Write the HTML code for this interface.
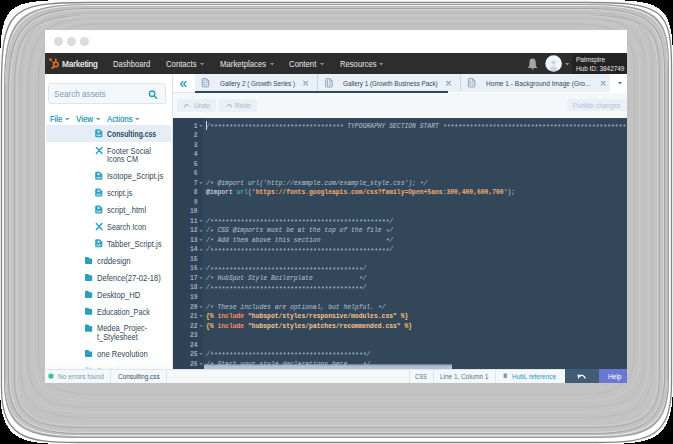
<!DOCTYPE html>
<html><head><meta charset="utf-8">
<style>
*{margin:0;padding:0;box-sizing:border-box}
html,body{width:673px;height:444px;overflow:hidden;background:#000}
body{position:relative;font-family:"Liberation Sans",sans-serif}
.a{position:absolute}
.t{position:absolute;white-space:nowrap;line-height:1}
svg.i{position:absolute;overflow:visible}
</style></head><body>
<svg class="a" style="left:0;top:0" width="673" height="444" viewBox="0 0 673 444"><path d="M0.00,86.30 C0.00,0.00 0.00,0.00 86.60,0.00 L587.80,0.00 C661.75,0.00 673.00,0.00 673.00,63.50 L673.00,384.50 C673.00,442.57 651.85,444.00 597.75,444.00 L76.30,444.00 C23.65,444.00 0.00,444.00 0.00,388.20 Z" fill="#fbfbfb" shape-rendering="crispEdges"/><path d="M1.50,88.80 C1.50,10.27 9.29,2.50 88.10,2.50 L586.30,2.50 C660.25,2.50 671.50,8.21 671.50,66.00 L671.50,383.00 C671.50,437.14 650.35,442.50 596.25,442.50 L77.80,442.50 C25.15,442.50 1.50,437.48 1.50,386.70 Z" fill="#fff" stroke="#858585" stroke-width="1.3"/><path d="M4.00,90.30 C4.00,16.95 16.99,4.00 90.60,4.00 L583.80,4.00 C656.22,4.00 669.00,13.53 669.00,67.50 L669.00,378.50 C669.00,429.07 647.85,438.00 593.75,438.00 L80.30,438.00 C27.65,438.00 4.00,429.63 4.00,382.20 Z" fill="#c3c3c3"/><path d="M4.50,90.80 C4.50,17.45 17.49,4.50 91.10,4.50 L583.30,4.50 C655.72,4.50 668.50,14.03 668.50,68.00 L668.50,378.00 C668.50,428.57 647.35,437.50 593.25,437.50 L80.80,437.50 C28.15,437.50 4.50,429.13 4.50,381.70 Z" fill="none" stroke="#9c9c9c" stroke-width="1.1"/><path d="M5.50,91.80 C5.50,20.17 20.22,5.50 92.10,5.50 L582.30,5.50 C653.02,5.50 667.50,16.30 667.50,69.00 L667.50,376.00 C667.50,425.38 646.35,435.50 592.25,435.50 L81.80,435.50 C29.15,435.50 5.50,426.01 5.50,379.70 Z" fill="none" stroke="#ececec" stroke-width="1"/><path d="M5.50,92.80 C5.50,22.03 21.09,6.50 92.10,6.50 L582.30,6.50 C652.16,6.50 667.50,17.93 667.50,70.00 L667.50,375.00 C667.50,423.79 646.35,434.50 592.25,434.50 L81.80,434.50 C29.15,434.50 5.50,424.46 5.50,378.70 Z" fill="none" stroke="#bdbdbd" stroke-width="1"/><path d="M8.50,93.94 C8.50,25.59 25.65,8.50 94.23,8.50 L580.15,8.50 C647.63,8.50 664.50,21.07 664.50,71.37 L664.50,374.60 C664.50,421.72 643.57,433.50 590.00,433.50 L84.04,433.50 C31.92,433.50 8.50,422.45 8.50,378.26 Z" fill="none" stroke="#a2a2a2" stroke-width="1"/><path d="M10.00,93.21 C10.00,27.08 27.64,9.50 94.00,9.50 L580.86,9.50 C646.14,9.50 663.50,22.43 663.50,71.09 L663.50,374.79 C663.50,420.38 642.99,432.50 590.51,432.50 L84.01,432.50 C32.94,432.50 10.00,421.13 10.00,378.37 Z" fill="none" stroke="#d6d6d6" stroke-width="1"/><path d="M14.50,92.31 C14.50,29.48 28.53,15.50 91.57,15.50 L583.67,15.50 C645.70,15.50 659.50,25.79 659.50,72.02 L659.50,374.55 C659.50,417.86 640.68,427.50 592.53,427.50 L82.41,427.50 C35.55,427.50 14.50,418.46 14.50,377.84 Z" fill="none" stroke="#adadad" stroke-width="1"/><path d="M16.50,90.85 C16.50,32.61 31.66,17.50 90.11,17.50 L585.08,17.50 C642.58,17.50 657.50,28.62 657.50,71.47 L657.50,374.93 C657.50,415.08 639.53,425.50 593.54,425.50 L81.35,425.50 C36.61,425.50 16.50,415.73 16.50,378.07 Z" fill="none" stroke="#cfcfcf" stroke-width="1"/><path d="M20.50,90.74 C20.50,26.51 34.15,12.90 98.61,12.90 L575.65,12.90 C639.07,12.90 652.50,22.91 652.50,70.18 L652.50,363.83 C652.50,408.12 633.43,417.50 584.62,417.50 L89.32,417.50 C41.84,417.50 20.50,408.70 20.50,367.17 Z" fill="none" stroke="#b9b9b9" stroke-width="1"/><path d="M24.50,88.94 C24.50,30.43 39.60,15.38 98.32,15.38 L575.88,15.38 C633.64,15.38 648.50,26.45 648.50,69.51 L648.50,361.58 C648.50,401.93 630.48,412.30 584.36,412.30 L89.54,412.30 C44.66,412.30 24.50,402.57 24.50,364.74 Z" fill="none" stroke="#cbcbcb" stroke-width="1"/><path d="M28.50,87.14 C28.50,34.09 44.79,17.86 98.02,17.86 L576.10,17.86 C628.47,17.86 644.50,29.81 644.50,68.84 L644.50,359.33 C644.50,395.91 627.52,407.10 584.09,407.10 L89.75,407.10 C47.49,407.10 28.50,396.60 28.50,362.30 Z" fill="none" stroke="#b9b9b9" stroke-width="1"/><path d="M33.50,84.89 C33.50,38.32 50.92,20.96 97.65,20.96 L576.38,20.96 C622.36,20.96 639.50,33.73 639.50,68.00 L639.50,356.52 C639.50,388.63 623.84,400.60 583.75,400.60 L90.02,400.60 C51.02,400.60 33.50,389.38 33.50,359.26 Z" fill="none" stroke="#cbcbcb" stroke-width="1"/><path d="M38.50,82.64 C38.50,42.14 56.65,24.06 97.28,24.06 L576.67,24.06 C616.65,24.06 634.50,37.37 634.50,67.16 L634.50,353.71 C634.50,381.63 618.73,394.10 583.42,394.10 L90.29,394.10 C54.56,394.10 38.50,382.41 38.50,356.22 Z" fill="none" stroke="#b9b9b9" stroke-width="1"/></svg>
<div id="ui" style="position:absolute;left:0;top:0;width:673px;height:444px">
<div class="a" style="left:45px;top:30px;width:582px;height:353px;background:#fff"></div>
<div class="a" style="left:54.400000000000006px;top:37.1px;width:8.6px;height:8.6px;background:#dcdcdc;border-radius:50%"></div>
<div class="a" style="left:67.3px;top:37.1px;width:8.6px;height:8.6px;background:#dcdcdc;border-radius:50%"></div>
<div class="a" style="left:80.2px;top:37.1px;width:8.6px;height:8.6px;background:#dcdcdc;border-radius:50%"></div>
<div class="a" style="left:45px;top:53px;width:582px;height:21px;background:#2d2d2d"></div>
<div class="a" style="left:572px;top:53px;width:55px;height:21px;background:#232323"></div>
<svg class="i" style="left:0;top:0" width="673" height="444"><g stroke="#f57722" fill="none" stroke-width="1.5" stroke-linecap="round">
<circle cx="55.8" cy="64.4" r="2.3" stroke-width="1.4"/><line x1="55.8" y1="62" x2="55.8" y2="59.8" stroke-width="1.3"/><line x1="54" y1="63" x2="50.8" y2="59.9" stroke-width="0.9"/><line x1="54.3" y1="66.1" x2="52.8" y2="67.6" stroke-width="1.1"/></g>
<g fill="#f57722"><circle cx="50.4" cy="59.5" r="1.25"/><circle cx="55.8" cy="59.4" r="0.8"/><circle cx="52.6" cy="67.8" r="1.15"/></g>
<path d="M532.6,58.4 C530.2,58.4 529.4,60.4 529.4,63 L529.3,65.8 C529.2,66.6 528.4,67 528.1,67.5 L528.1,68 L537.1,68 L537.1,67.5 C536.8,67 536,66.6 535.9,65.8 L535.8,63 C535.8,60.4 535,58.4 532.6,58.4 Z" fill="#a4a4a4"/>
<circle cx="532.6" cy="68.7" r="0.9" fill="#a4a4a4"/>
<circle cx="553.6" cy="63.5" r="8.3" fill="#f2f5f8"/>
<circle cx="553.5" cy="62.6" r="2.1" fill="#cad7e4"/>
<path d="M549.2,69.6 C549.9,67.3 551.5,66.2 553.5,66.2 C555.5,66.2 557.1,67.3 557.8,69.6 C556.6,70.6 555.2,71.1 553.5,71.1 C551.8,71.1 550.4,70.6 549.2,69.6 Z" fill="#cad7e4"/>
</svg>
<svg class="i" style="left:199.20px;top:62.40px" width="6.4" height="4.4"><path d="M1,1 L5.40,1 L3.20,3.40 Z" fill="#8a8a8a"/></svg>
<svg class="i" style="left:268.80px;top:62.40px" width="6.4" height="4.4"><path d="M1,1 L5.40,1 L3.20,3.40 Z" fill="#8a8a8a"/></svg>
<svg class="i" style="left:319.10px;top:62.40px" width="6.4" height="4.4"><path d="M1,1 L5.40,1 L3.20,3.40 Z" fill="#8a8a8a"/></svg>
<svg class="i" style="left:378.20px;top:62.40px" width="6.4" height="4.4"><path d="M1,1 L5.40,1 L3.20,3.40 Z" fill="#8a8a8a"/></svg>
<svg class="i" style="left:564.10px;top:62.40px" width="6.4" height="4.4"><path d="M1,1 L5.40,1 L3.20,3.40 Z" fill="#8c8c8c"/></svg>
<div class="t" style="left:61.8px;top:60.38px;font-size:9px;color:#ececec;transform:scaleX(0.8984);transform-origin:0 0;text-shadow:0.35px 0 0 rgba(236,236,236,0.8);">Marketing</div>
<div class="t" style="left:113.4px;top:60.38px;font-size:9px;color:#e6e6e6;transform:scaleX(0.8472);transform-origin:0 0;">Dashboard</div>
<div class="t" style="left:166.3px;top:60.38px;font-size:9px;color:#e6e6e6;transform:scaleX(0.8587);transform-origin:0 0;">Contacts</div>
<div class="t" style="left:220.2px;top:60.38px;font-size:9px;color:#e6e6e6;transform:scaleX(0.8632);transform-origin:0 0;">Marketplaces</div>
<div class="t" style="left:289.4px;top:60.38px;font-size:9px;color:#e6e6e6;transform:scaleX(0.8692);transform-origin:0 0;">Content</div>
<div class="t" style="left:339.7px;top:60.38px;font-size:9px;color:#e6e6e6;transform:scaleX(0.8508);transform-origin:0 0;">Resources</div>
<div class="t" style="left:575.9px;top:56.17px;font-size:7.6px;color:#e8e8e8;transform:scaleX(0.8612);transform-origin:0 0;">Palmspire</div>
<div class="t" style="left:575.9px;top:65.27px;font-size:7.6px;color:#e8e8e8;transform:scaleX(0.8423);transform-origin:0 0;">Hub ID: 3842749</div>
<div class="a" style="left:45px;top:74px;width:127px;height:295px;background:#fff"></div>
<div class="a" style="left:172px;top:74px;width:1px;height:295px;background:#dfe3eb"></div>
<div class="a" style="left:47.7px;top:83.3px;width:118.4px;height:21.2px;background:#f5f8fa;border:1px solid #dde5ee;border-radius:3px"></div>
<div class="t" style="left:53.7px;top:89.16px;font-size:9.5px;color:#7c98b6;transform:scaleX(0.8572);transform-origin:0 0;">Search assets</div>
<div class="t" style="left:49.8px;top:115.45px;font-size:8.8px;color:#1c95ba;transform:scaleX(0.8603);transform-origin:0 0;text-shadow:0.25px 0 0 rgba(28,149,186,0.6);">File</div>
<div class="t" style="left:75.9px;top:115.45px;font-size:8.8px;color:#1c95ba;transform:scaleX(0.8987);transform-origin:0 0;text-shadow:0.25px 0 0 rgba(28,149,186,0.6);">View</div>
<div class="t" style="left:106.8px;top:115.45px;font-size:8.8px;color:#1c95ba;transform:scaleX(0.8836);transform-origin:0 0;text-shadow:0.25px 0 0 rgba(28,149,186,0.6);">Actions</div>
<div class="a" style="left:46px;top:125.4px;width:125px;height:17.1px;background:#e5eef6"></div>
<div class="t" style="left:107.4px;top:130.05px;font-size:8.8px;color:#33475b;font-weight:bold;transform:scaleX(0.7800);transform-origin:0 0;">Consulting.css</div>
<div class="t" style="left:107.4px;top:146.95px;font-size:8.8px;color:#33475b;transform:scaleX(0.8467);transform-origin:0 0;">Footer Social</div>
<div class="t" style="left:107.4px;top:155.25px;font-size:8.8px;color:#33475b;transform:scaleX(0.8341);transform-origin:0 0;">Icons CM</div>
<div class="t" style="left:107.4px;top:172.25px;font-size:8.8px;color:#33475b;transform:scaleX(0.8654);transform-origin:0 0;">Isotope_Script.js</div>
<div class="t" style="left:107.4px;top:189.15px;font-size:8.8px;color:#33475b;transform:scaleX(0.8483);transform-origin:0 0;">script.js</div>
<div class="t" style="left:107.4px;top:206.05px;font-size:8.8px;color:#33475b;transform:scaleX(0.8713);transform-origin:0 0;">script_.html</div>
<div class="t" style="left:107.4px;top:222.95px;font-size:8.8px;color:#33475b;transform:scaleX(0.8347);transform-origin:0 0;">Search Icon</div>
<div class="t" style="left:107.4px;top:239.85px;font-size:8.8px;color:#33475b;transform:scaleX(0.8638);transform-origin:0 0;">Tabber_Script.js</div>
<div class="t" style="left:96.8px;top:256.75px;font-size:8.8px;color:#33475b;transform:scaleX(0.8832);transform-origin:0 0;">crddesign</div>
<div class="t" style="left:96.8px;top:273.85px;font-size:8.8px;color:#33475b;transform:scaleX(0.8624);transform-origin:0 0;">Defence(27-02-18)</div>
<div class="t" style="left:96.8px;top:290.65px;font-size:8.8px;color:#33475b;transform:scaleX(0.8659);transform-origin:0 0;">Desktop_HD</div>
<div class="t" style="left:96.8px;top:307.55px;font-size:8.8px;color:#33475b;transform:scaleX(0.8318);transform-origin:0 0;">Education_Pack</div>
<div class="t" style="left:96.8px;top:324.45px;font-size:8.8px;color:#33475b;transform:scaleX(0.8412);transform-origin:0 0;">Medea_Projec-</div>
<div class="t" style="left:96.8px;top:332.75px;font-size:8.8px;color:#33475b;transform:scaleX(0.8424);transform-origin:0 0;">t_Stylesheet</div>
<div class="t" style="left:96.8px;top:349.65px;font-size:8.8px;color:#33475b;transform:scaleX(0.8653);transform-origin:0 0;">one Revolution</div>
<div class="t" style="left:96.8px;top:366.55px;font-size:8.8px;color:#33475b;transform:scaleX(0.9570);transform-origin:0 0;">Portal</div>
<svg class="i" style="left:0;top:0" width="673" height="444"><circle cx="152.1" cy="93.7" r="2.75" fill="none" stroke="#2b9cbd" stroke-width="1.35"/><line x1="154.2" y1="95.8" x2="156.6" y2="98.3" stroke="#2b9cbd" stroke-width="1.45" stroke-linecap="round"/><path d="M96.4,129.20000000000002 L99.8,129.20000000000002 L102.4,131.8 L102.4,136.00000000000003 Q102.4,137.20000000000002 101.2,137.20000000000002 L96.4,137.20000000000002 Q95.2,137.20000000000002 95.2,136.00000000000003 L95.2,130.4 Q95.2,129.20000000000002 96.4,129.20000000000002 Z" fill="#34a2c2"/><circle cx="98.60000000000001" cy="131.70000000000002" r="1.1" fill="#fff" opacity="0.9"/><rect x="96.4" y="134.4" width="4.8" height="1.6" fill="#fff" opacity="0.55"/><path d="M96.4,147.5 L102.0,153.5 M102.0,147.5 L96.4,153.5" stroke="#34a2c2" stroke-width="1.5" stroke-linecap="round"/><path d="M96.4,171.70000000000002 L99.8,171.70000000000002 L102.4,174.3 L102.4,178.50000000000003 Q102.4,179.70000000000002 101.2,179.70000000000002 L96.4,179.70000000000002 Q95.2,179.70000000000002 95.2,178.50000000000003 L95.2,172.9 Q95.2,171.70000000000002 96.4,171.70000000000002 Z" fill="#34a2c2"/><circle cx="98.60000000000001" cy="174.20000000000002" r="1.1" fill="#fff" opacity="0.9"/><rect x="96.4" y="176.9" width="4.8" height="1.6" fill="#fff" opacity="0.55"/><path d="M96.4,188.60000000000002 L99.8,188.60000000000002 L102.4,191.20000000000002 L102.4,195.40000000000003 Q102.4,196.60000000000002 101.2,196.60000000000002 L96.4,196.60000000000002 Q95.2,196.60000000000002 95.2,195.40000000000003 L95.2,189.8 Q95.2,188.60000000000002 96.4,188.60000000000002 Z" fill="#34a2c2"/><circle cx="98.60000000000001" cy="191.10000000000002" r="1.1" fill="#fff" opacity="0.9"/><rect x="96.4" y="193.8" width="4.8" height="1.6" fill="#fff" opacity="0.55"/><path d="M96.4,205.5 L99.8,205.5 L102.4,208.1 L102.4,212.3 Q102.4,213.5 101.2,213.5 L96.4,213.5 Q95.2,213.5 95.2,212.3 L95.2,206.7 Q95.2,205.5 96.4,205.5 Z" fill="#34a2c2"/><circle cx="98.60000000000001" cy="208.0" r="1.1" fill="#fff" opacity="0.9"/><rect x="96.4" y="210.7" width="4.8" height="1.6" fill="#fff" opacity="0.55"/><path d="M96.4,223.6 L102.0,229.6 M102.0,223.6 L96.4,229.6" stroke="#34a2c2" stroke-width="1.5" stroke-linecap="round"/><path d="M96.4,239.3 L99.8,239.3 L102.4,241.9 L102.4,246.10000000000002 Q102.4,247.3 101.2,247.3 L96.4,247.3 Q95.2,247.3 95.2,246.10000000000002 L95.2,240.5 Q95.2,239.3 96.4,239.3 Z" fill="#34a2c2"/><circle cx="98.60000000000001" cy="241.8" r="1.1" fill="#fff" opacity="0.9"/><rect x="96.4" y="244.5" width="4.8" height="1.6" fill="#fff" opacity="0.55"/><path d="M85.9,257.0 L88,257.0 Q88.6,257.0 88.9,257.6 L89.3,258.4 L91.4,258.4 Q92.2,258.4 92.2,259.2 L92.2,263.3 Q92.2,264.1 91.4,264.1 L85.8,264.1 Q85,264.1 85,263.3 L85,257.9 Q85,257.0 85.9,257.0 Z" fill="#2b9dc0"/><path d="M85.9,273.9 L88,273.9 Q88.6,273.9 88.9,274.5 L89.3,275.29999999999995 L91.4,275.29999999999995 Q92.2,275.29999999999995 92.2,276.09999999999997 L92.2,280.2 Q92.2,281.0 91.4,281.0 L85.8,281.0 Q85,281.0 85,280.2 L85,274.79999999999995 Q85,273.9 85.9,273.9 Z" fill="#2b9dc0"/><path d="M85.9,290.79999999999995 L88,290.79999999999995 Q88.6,290.79999999999995 88.9,291.4 L89.3,292.19999999999993 L91.4,292.19999999999993 Q92.2,292.19999999999993 92.2,292.99999999999994 L92.2,297.09999999999997 Q92.2,297.9 91.4,297.9 L85.8,297.9 Q85,297.9 85,297.09999999999997 L85,291.69999999999993 Q85,290.79999999999995 85.9,290.79999999999995 Z" fill="#2b9dc0"/><path d="M85.9,307.7 L88,307.7 Q88.6,307.7 88.9,308.3 L89.3,309.09999999999997 L91.4,309.09999999999997 Q92.2,309.09999999999997 92.2,309.9 L92.2,314.0 Q92.2,314.8 91.4,314.8 L85.8,314.8 Q85,314.8 85,314.0 L85,308.59999999999997 Q85,307.7 85.9,307.7 Z" fill="#2b9dc0"/><path d="M85.9,324.59999999999997 L88,324.59999999999997 Q88.6,324.59999999999997 88.9,325.2 L89.3,325.99999999999994 L91.4,325.99999999999994 Q92.2,325.99999999999994 92.2,326.79999999999995 L92.2,330.9 Q92.2,331.7 91.4,331.7 L85.8,331.7 Q85,331.7 85,330.9 L85,325.49999999999994 Q85,324.59999999999997 85.9,324.59999999999997 Z" fill="#2b9dc0"/><path d="M85.9,350.0 L88,350.0 Q88.6,350.0 88.9,350.6 L89.3,351.4 L91.4,351.4 Q92.2,351.4 92.2,352.2 L92.2,356.3 Q92.2,357.1 91.4,357.1 L85.8,357.1 Q85,357.1 85,356.3 L85,350.9 Q85,350.0 85.9,350.0 Z" fill="#2b9dc0"/><path d="M85.9,366.9 L88,366.9 Q88.6,366.9 88.9,367.5 L89.3,368.29999999999995 L91.4,368.29999999999995 Q92.2,368.29999999999995 92.2,369.09999999999997 L92.2,373.2 Q92.2,374.0 91.4,374.0 L85.8,374.0 Q85,374.0 85,373.2 L85,367.79999999999995 Q85,366.9 85.9,366.9 Z" fill="#2b9dc0"/></svg>
<svg class="i" style="left:64.10px;top:116.90px" width="6.6" height="4.6"><path d="M1,1 L5.60,1 L3.30,3.60 Z" fill="#7c98b6"/></svg>
<svg class="i" style="left:94.80px;top:116.90px" width="6.6" height="4.6"><path d="M1,1 L5.60,1 L3.30,3.60 Z" fill="#7c98b6"/></svg>
<svg class="i" style="left:134.00px;top:116.90px" width="6.6" height="4.6"><path d="M1,1 L5.60,1 L3.30,3.60 Z" fill="#7c98b6"/></svg>
<div class="a" style="left:45px;top:360px;width:127px;height:9px;background:linear-gradient(rgba(255,255,255,0),rgba(248,250,251,0.75) 85%)"></div>
<div class="a" style="left:173px;top:74px;width:454px;height:18px;background:#fff"></div>
<div class="a" style="left:194.5px;top:74px;width:415.5px;height:18px;background:#eaf0f6"></div>
<div class="a" style="left:173px;top:91.5px;width:21.5px;height:1.0px;background:#dfe3eb"></div>
<div class="a" style="left:194.5px;top:90.8px;width:253.5px;height:1.9px;background:#33475b"></div>
<div class="a" style="left:317.3px;top:74px;width:1.0px;height:17px;background:#cbd6e2"></div>
<div class="a" style="left:460.3px;top:74px;width:1.0px;height:17px;background:#cbd6e2"></div>
<div class="t" style="left:219.6px;top:79.62px;font-size:7.3px;color:#33475b;transform:scaleX(0.8703);transform-origin:0 0;">Gallery 2 ( Growth Series )</div>
<div class="t" style="left:342.9px;top:79.62px;font-size:7.3px;color:#33475b;transform:scaleX(0.8646);transform-origin:0 0;">Gallery 1 (Growth Business Pack)</div>
<div class="t" style="left:485.7px;top:79.62px;font-size:7.3px;color:#33475b;transform:scaleX(0.9006);transform-origin:0 0;">Home 1 - Background Image (Gro...</div>
<svg class="i" style="left:0;top:0" width="673" height="444"><path d="M203.0,78.6 L206.39999999999998,78.6 L208.7,80.89999999999999 L208.7,86.1 Q208.7,86.89999999999999 207.89999999999998,86.89999999999999 L203.0,86.89999999999999 Q202.2,86.89999999999999 202.2,86.1 L202.2,79.39999999999999 Q202.2,78.6 203.0,78.6 Z" fill="none" stroke="#7c98b6" stroke-width="0.9"/><path d="M204.0,79.69999999999999 L204.0,85.89999999999999 M205.29999999999998,82.69999999999999 L207.5,82.69999999999999 M205.29999999999998,84.69999999999999 L207.5,84.69999999999999 M206.29999999999998,78.89999999999999 L206.29999999999998,81.0 L208.5,81.0" fill="none" stroke="#7c98b6" stroke-width="0.7"/><path d="M326.5,78.6 L329.9,78.6 L332.2,80.89999999999999 L332.2,86.1 Q332.2,86.89999999999999 331.4,86.89999999999999 L326.5,86.89999999999999 Q325.7,86.89999999999999 325.7,86.1 L325.7,79.39999999999999 Q325.7,78.6 326.5,78.6 Z" fill="none" stroke="#7c98b6" stroke-width="0.9"/><path d="M327.5,79.69999999999999 L327.5,85.89999999999999 M328.8,82.69999999999999 L331.0,82.69999999999999 M328.8,84.69999999999999 L331.0,84.69999999999999 M329.8,78.89999999999999 L329.8,81.0 L332.0,81.0" fill="none" stroke="#7c98b6" stroke-width="0.7"/><path d="M469.2,78.6 L472.59999999999997,78.6 L474.9,80.89999999999999 L474.9,86.1 Q474.9,86.89999999999999 474.09999999999997,86.89999999999999 L469.2,86.89999999999999 Q468.4,86.89999999999999 468.4,86.1 L468.4,79.39999999999999 Q468.4,78.6 469.2,78.6 Z" fill="none" stroke="#7c98b6" stroke-width="0.9"/><path d="M470.2,79.69999999999999 L470.2,85.89999999999999 M471.5,82.69999999999999 L473.7,82.69999999999999 M471.5,84.69999999999999 L473.7,84.69999999999999 M472.5,78.89999999999999 L472.5,81.0 L474.7,81.0" fill="none" stroke="#7c98b6" stroke-width="0.7"/><path d="M303.8,81.3 L307.59999999999997,85.1 M307.59999999999997,81.3 L303.8,85.1" stroke="#7c98b6" stroke-width="1.05" stroke-linecap="round"/><path d="M446.6,81.3 L450.4,85.1 M450.4,81.3 L446.6,85.1" stroke="#7c98b6" stroke-width="1.05" stroke-linecap="round"/><path d="M601.3000000000001,81.3 L605.1,85.1 M605.1,81.3 L601.3000000000001,85.1" stroke="#7c98b6" stroke-width="1.05" stroke-linecap="round"/><path d="M183.2,81 L180.6,83.9 L183.2,86.8 M186.3,81 L183.7,83.9 L186.3,86.8" fill="none" stroke="#2b9cbd" stroke-width="1.4"/></svg>
<svg class="i" style="left:616.50px;top:81.20px" width="6.2" height="4.4"><path d="M1,1 L5.20,1 L3.10,3.40 Z" fill="#5f7b9a"/></svg>
<div class="a" style="left:173px;top:92.7px;width:454px;height:25.7px;background:#f5f8fa"></div>
<div class="a" style="left:177.1px;top:98.8px;width:38.9px;height:13.2px;background:#eaf0f6;border-radius:2px"></div>
<div class="a" style="left:218.5px;top:98.8px;width:38.5px;height:13.2px;background:#eaf0f6;border-radius:2px"></div>
<div class="t" style="left:193.5px;top:102.12px;font-size:7.3px;color:#a3b6ca;transform:scaleX(0.9226);transform-origin:0 0;">Undo</div>
<div class="t" style="left:235px;top:102.12px;font-size:7.3px;color:#a3b6ca;transform:scaleX(0.8939);transform-origin:0 0;">Redo</div>
<div class="a" style="left:567.3px;top:98.8px;width:59.3px;height:12.2px;background:#eaf0f6;border-radius:2px"></div>
<div class="t" style="left:573.3px;top:101.62px;font-size:7.3px;color:#b0c1d4;transform:scaleX(0.8829);transform-origin:0 0;">Publish changes</div>
<svg class="i" style="left:0;top:0" width="673" height="444"><path d="M184.8,107.6 L184.8,105.2 L187.2,105.2 M184.9,105.3 C186.4,104.2 188.6,104.3 189.6,106.4" fill="none" stroke="#a9bbcf" stroke-width="1"/><path d="M231,107.6 L231,105.2 L228.6,105.2 M230.9,105.3 C229.4,104.2 227.2,104.3 226.2,106.4" fill="none" stroke="#a9bbcf" stroke-width="1"/></svg>
<div class="a" style="left:172.7px;top:118.3px;width:454.3px;height:250.7px;background:#33475b;overflow:hidden">
<div class="a" style="left:0;top:0;width:30.2px;height:251px;background:#2e4155"></div>
<div class="t" style="left:21.08px;top:4.22px;font:bold 6.37px 'Liberation Mono',monospace;color:#9aadc2">1</div>
<svg class="i" style="left:26.40px;top:5.45px" width="4" height="4"><path d="M0.2,1 L3.8,1 L2,3.2 Z" fill="#6a8199"/></svg>
<div class="t" style="left:33.30px;top:4.22px;font:6.37px 'Liberation Mono',monospace;white-space:pre"><span style="color:#b3c3d3;font-style:italic">/<span style="position:relative;top:1.3px">***********************************</span> TYPOGRAPHY SECTION START <span style="position:relative;top:1.3px">************************************************************</span></span></div>
<div class="t" style="left:21.08px;top:13.74px;font:bold 6.37px 'Liberation Mono',monospace;color:#9aadc2">2</div>
<div class="t" style="left:21.08px;top:23.27px;font:bold 6.37px 'Liberation Mono',monospace;color:#9aadc2">3</div>
<div class="t" style="left:21.08px;top:32.80px;font:bold 6.37px 'Liberation Mono',monospace;color:#9aadc2">4</div>
<div class="t" style="left:21.08px;top:42.32px;font:bold 6.37px 'Liberation Mono',monospace;color:#9aadc2">5</div>
<div class="t" style="left:21.08px;top:51.85px;font:bold 6.37px 'Liberation Mono',monospace;color:#9aadc2">6</div>
<div class="t" style="left:21.08px;top:61.37px;font:bold 6.37px 'Liberation Mono',monospace;color:#9aadc2">7</div>
<svg class="i" style="left:26.40px;top:62.61px" width="4" height="4"><path d="M0.2,1 L3.8,1 L2,3.2 Z" fill="#6a8199"/></svg>
<div class="t" style="left:33.30px;top:61.37px;font:6.37px 'Liberation Mono',monospace;white-space:pre"><span style="color:#b3c3d3;font-style:italic">/<span style="position:relative;top:1.3px">*</span> @import url(&#x27;http://example.com/example_style.css&#x27;); <span style="position:relative;top:1.3px">*</span>/</span></div>
<div class="t" style="left:21.08px;top:70.90px;font:bold 6.37px 'Liberation Mono',monospace;color:#9aadc2">8</div>
<div class="t" style="left:33.30px;top:70.90px;font:6.37px 'Liberation Mono',monospace;white-space:pre"><span style="color:#e3eaf1">@import</span><span style="color:#cbd6e2"> </span><span style="color:#4fc9a9">url</span><span style="color:#cbd6e2">(</span><span style="color:#f4ac6c;font-weight:bold">&#x27;https://fonts.googleapis.com/css?family=Open+Sans:300,400,600,700&#x27;</span><span style="color:#cbd6e2">);</span></div>
<div class="t" style="left:21.08px;top:80.43px;font:bold 6.37px 'Liberation Mono',monospace;color:#9aadc2">9</div>
<div class="t" style="left:17.26px;top:89.95px;font:bold 6.37px 'Liberation Mono',monospace;color:#9aadc2">10</div>
<div class="t" style="left:17.26px;top:99.48px;font:bold 6.37px 'Liberation Mono',monospace;color:#9aadc2">11</div>
<svg class="i" style="left:26.40px;top:100.71px" width="4" height="4"><path d="M0.2,1 L3.8,1 L2,3.2 Z" fill="#6a8199"/></svg>
<div class="t" style="left:33.30px;top:99.48px;font:6.37px 'Liberation Mono',monospace;white-space:pre"><span style="color:#b3c3d3;font-style:italic">/<span style="position:relative;top:1.3px">***********************************************</span>/</span></div>
<div class="t" style="left:17.26px;top:109.00px;font:bold 6.37px 'Liberation Mono',monospace;color:#9aadc2">12</div>
<svg class="i" style="left:26.40px;top:110.24px" width="4" height="4"><path d="M0.2,1 L3.8,1 L2,3.2 Z" fill="#6a8199"/></svg>
<div class="t" style="left:33.30px;top:109.00px;font:6.37px 'Liberation Mono',monospace;white-space:pre"><span style="color:#b3c3d3;font-style:italic">/<span style="position:relative;top:1.3px">*</span> CSS @imports must be at the top of the file <span style="position:relative;top:1.3px">*</span>/</span></div>
<div class="t" style="left:17.26px;top:118.53px;font:bold 6.37px 'Liberation Mono',monospace;color:#9aadc2">13</div>
<svg class="i" style="left:26.40px;top:119.76px" width="4" height="4"><path d="M0.2,1 L3.8,1 L2,3.2 Z" fill="#6a8199"/></svg>
<div class="t" style="left:33.30px;top:118.53px;font:6.37px 'Liberation Mono',monospace;white-space:pre"><span style="color:#b3c3d3;font-style:italic">/<span style="position:relative;top:1.3px">*</span> Add them above this section                 <span style="position:relative;top:1.3px">*</span>/</span></div>
<div class="t" style="left:17.26px;top:128.06px;font:bold 6.37px 'Liberation Mono',monospace;color:#9aadc2">14</div>
<svg class="i" style="left:26.40px;top:129.29px" width="4" height="4"><path d="M0.2,1 L3.8,1 L2,3.2 Z" fill="#6a8199"/></svg>
<div class="t" style="left:33.30px;top:128.06px;font:6.37px 'Liberation Mono',monospace;white-space:pre"><span style="color:#b3c3d3;font-style:italic">/<span style="position:relative;top:1.3px">***********************************************</span>/</span></div>
<div class="t" style="left:17.26px;top:137.58px;font:bold 6.37px 'Liberation Mono',monospace;color:#9aadc2">15</div>
<div class="t" style="left:17.26px;top:147.11px;font:bold 6.37px 'Liberation Mono',monospace;color:#9aadc2">16</div>
<svg class="i" style="left:26.40px;top:148.34px" width="4" height="4"><path d="M0.2,1 L3.8,1 L2,3.2 Z" fill="#6a8199"/></svg>
<div class="t" style="left:33.30px;top:147.11px;font:6.37px 'Liberation Mono',monospace;white-space:pre"><span style="color:#b3c3d3;font-style:italic">/<span style="position:relative;top:1.3px">****************************************</span>/</span></div>
<div class="t" style="left:17.26px;top:156.63px;font:bold 6.37px 'Liberation Mono',monospace;color:#9aadc2">17</div>
<svg class="i" style="left:26.40px;top:157.87px" width="4" height="4"><path d="M0.2,1 L3.8,1 L2,3.2 Z" fill="#6a8199"/></svg>
<div class="t" style="left:33.30px;top:156.63px;font:6.37px 'Liberation Mono',monospace;white-space:pre"><span style="color:#b3c3d3;font-style:italic">/<span style="position:relative;top:1.3px">*</span> HubSpot Style Boilerplate            <span style="position:relative;top:1.3px">*</span>/</span></div>
<div class="t" style="left:17.26px;top:166.16px;font:bold 6.37px 'Liberation Mono',monospace;color:#9aadc2">18</div>
<svg class="i" style="left:26.40px;top:167.39px" width="4" height="4"><path d="M0.2,1 L3.8,1 L2,3.2 Z" fill="#6a8199"/></svg>
<div class="t" style="left:33.30px;top:166.16px;font:6.37px 'Liberation Mono',monospace;white-space:pre"><span style="color:#b3c3d3;font-style:italic">/<span style="position:relative;top:1.3px">****************************************</span>/</span></div>
<div class="t" style="left:17.26px;top:175.69px;font:bold 6.37px 'Liberation Mono',monospace;color:#9aadc2">19</div>
<div class="t" style="left:17.26px;top:185.21px;font:bold 6.37px 'Liberation Mono',monospace;color:#9aadc2">20</div>
<svg class="i" style="left:26.40px;top:186.44px" width="4" height="4"><path d="M0.2,1 L3.8,1 L2,3.2 Z" fill="#6a8199"/></svg>
<div class="t" style="left:33.30px;top:185.21px;font:6.37px 'Liberation Mono',monospace;white-space:pre"><span style="color:#b3c3d3;font-style:italic">/<span style="position:relative;top:1.3px">*</span> These includes are optional, but helpful. <span style="position:relative;top:1.3px">*</span>/</span></div>
<div class="t" style="left:17.26px;top:194.74px;font:bold 6.37px 'Liberation Mono',monospace;color:#9aadc2">21</div>
<svg class="i" style="left:26.40px;top:195.97px" width="4" height="4"><path d="M0.2,1 L3.8,1 L2,3.2 Z" fill="#6a8199"/></svg>
<div class="t" style="left:33.30px;top:194.74px;font:6.37px 'Liberation Mono',monospace;white-space:pre"><span style="color:#f5c26b;font-weight:bold">{%</span><span style="color:#cbd6e2"> </span><span style="color:#ff8a5b;font-weight:bold">include</span><span style="color:#cbd6e2"> </span><span style="color:#fbc38a;font-weight:bold">&quot;hubspot/styles/responsive/modules.css&quot;</span><span style="color:#cbd6e2"> </span><span style="color:#f5c26b;font-weight:bold">%}</span></div>
<div class="t" style="left:17.26px;top:204.26px;font:bold 6.37px 'Liberation Mono',monospace;color:#9aadc2">22</div>
<svg class="i" style="left:26.40px;top:205.50px" width="4" height="4"><path d="M0.2,1 L3.8,1 L2,3.2 Z" fill="#6a8199"/></svg>
<div class="t" style="left:33.30px;top:204.26px;font:6.37px 'Liberation Mono',monospace;white-space:pre"><span style="color:#f5c26b;font-weight:bold">{%</span><span style="color:#cbd6e2"> </span><span style="color:#ff8a5b;font-weight:bold">include</span><span style="color:#cbd6e2"> </span><span style="color:#fbc38a;font-weight:bold">&quot;hubspot/styles/patches/recommended.css&quot;</span><span style="color:#cbd6e2"> </span><span style="color:#f5c26b;font-weight:bold">%}</span></div>
<div class="t" style="left:17.26px;top:213.79px;font:bold 6.37px 'Liberation Mono',monospace;color:#9aadc2">23</div>
<div class="t" style="left:17.26px;top:223.32px;font:bold 6.37px 'Liberation Mono',monospace;color:#9aadc2">24</div>
<div class="t" style="left:17.26px;top:232.84px;font:bold 6.37px 'Liberation Mono',monospace;color:#9aadc2">25</div>
<svg class="i" style="left:26.40px;top:234.07px" width="4" height="4"><path d="M0.2,1 L3.8,1 L2,3.2 Z" fill="#6a8199"/></svg>
<div class="t" style="left:33.30px;top:232.84px;font:6.37px 'Liberation Mono',monospace;white-space:pre"><span style="color:#b3c3d3;font-style:italic">/<span style="position:relative;top:1.3px">*****************************************</span>/</span></div>
<div class="t" style="left:17.26px;top:242.37px;font:bold 6.37px 'Liberation Mono',monospace;color:#9aadc2">26</div>
<svg class="i" style="left:26.40px;top:243.60px" width="4" height="4"><path d="M0.2,1 L3.8,1 L2,3.2 Z" fill="#6a8199"/></svg>
<div class="t" style="left:33.30px;top:242.37px;font:6.37px 'Liberation Mono',monospace;white-space:pre"><span style="color:#b3c3d3;font-style:italic">/<span style="position:relative;top:1.3px">*</span> Start your style declarations here    <span style="position:relative;top:1.3px">*</span>/</span></div>
<div class="t" style="left:17.26px;top:251.89px;font:bold 6.37px 'Liberation Mono',monospace;color:#9aadc2">27</div>
<div class="a" style="left:33px;top:2.4px;width:0.8px;height:9px;background:#cbd6e2"></div>
<div class="a" style="left:31px;top:245.3px;width:248px;height:5px;background:linear-gradient(rgba(180,196,212,0.4),#b2c1d1 45%)"></div>
</div>
<div class="a" style="left:45px;top:369px;width:582px;height:14px;background:#f5f8fa;border-top:1px solid #dfe3eb"></div>
<div class="a" style="left:110.4px;top:369.5px;width:1px;height:13.5px;background:#dfe3eb"></div>
<div class="a" style="left:166.4px;top:369.5px;width:1px;height:13.5px;background:#dfe3eb"></div>
<div class="a" style="left:408.5px;top:369.5px;width:1px;height:13.5px;background:#dfe3eb"></div>
<div class="a" style="left:433.3px;top:369.5px;width:1px;height:13.5px;background:#dfe3eb"></div>
<div class="a" style="left:494.5px;top:369.5px;width:1px;height:13.5px;background:#dfe3eb"></div>
<div class="a" style="left:565.1px;top:369px;width:33.8px;height:13.8px;background:#425b76"></div>
<div class="a" style="left:598.9px;top:369px;width:28.1px;height:13.8px;background:#6a78d1"></div>
<svg class="i" style="left:0;top:0" width="673" height="444"><circle cx="51" cy="376.1" r="2.7" fill="#3fbf9a"/><rect x="503.6" y="373.6" width="3.3" height="4.4" rx="0.4" fill="#7c98b6"/><path d="M577.5,374.4 L581.2,375.0 L578.2,378.9 Z" fill="#fff"/><path d="M579.4,376.6 Q582.8,373.2 585.5,378.5" fill="none" stroke="#fff" stroke-width="1.35"/></svg>
<div class="t" style="left:58.1px;top:373.42px;font-size:7.3px;color:#7d95ad;transform:scaleX(0.9050);transform-origin:0 0;">No errors found</div>
<div class="t" style="left:117.6px;top:373.42px;font-size:7.3px;color:#33475b;transform:scaleX(0.8784);transform-origin:0 0;">Consulting.css</div>
<div class="t" style="left:414.5px;top:373.42px;font-size:7.3px;color:#516f90;transform:scaleX(0.7994);transform-origin:0 0;">CSS</div>
<div class="t" style="left:439.6px;top:373.42px;font-size:7.3px;color:#516f90;transform:scaleX(0.8770);transform-origin:0 0;">Line 1, Column 1</div>
<div class="t" style="left:512px;top:373.42px;font-size:7.3px;color:#1f97bb;transform:scaleX(0.8791);transform-origin:0 0;">HubL reference</div>
<div class="t" style="left:608.2px;top:373.42px;font-size:7.3px;color:#fff;transform:scaleX(0.8992);transform-origin:0 0;">Help</div>
</div>
</body></html>
